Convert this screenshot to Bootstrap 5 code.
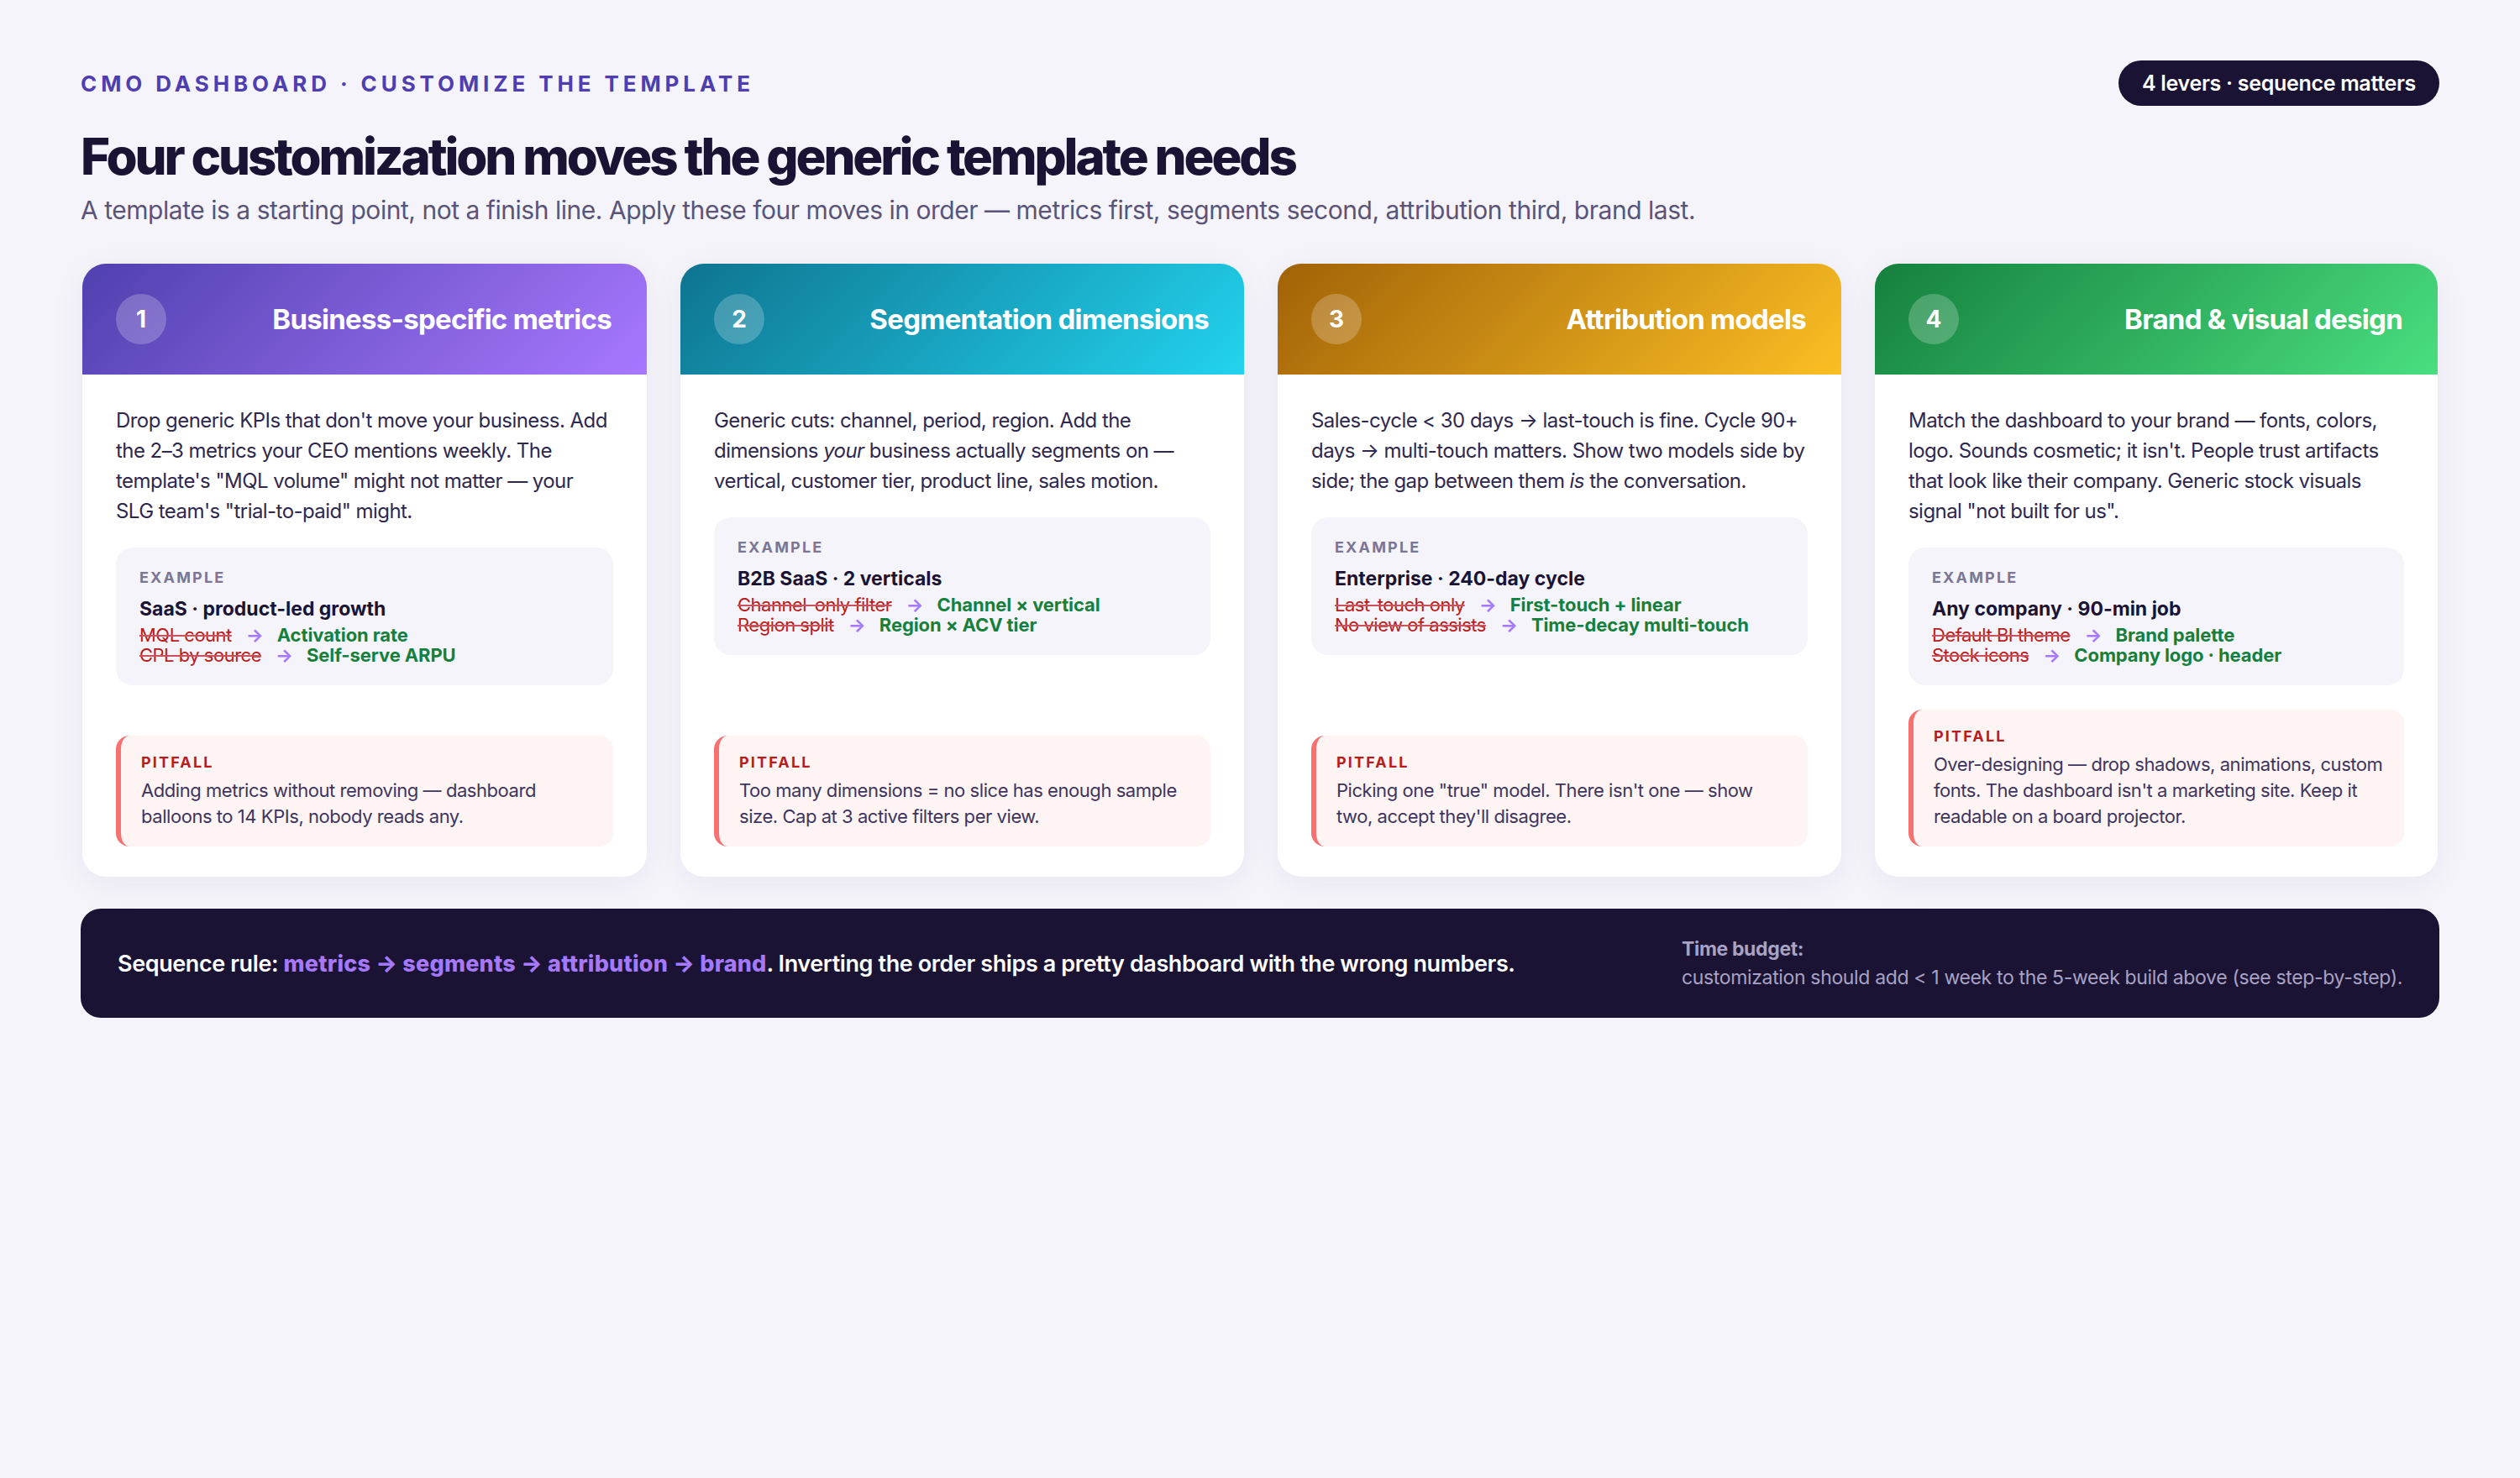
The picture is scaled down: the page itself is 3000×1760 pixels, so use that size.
<!DOCTYPE html>
<html lang="en">
<head>
  <meta charset="UTF-8" />
  <meta name="viewport" content="width=device-width, initial-scale=1.0"/>
  <title>Customize the template</title>
  <link href="https://cdn.jsdelivr.net/npm/bootstrap@5.3.0/dist/css/bootstrap.min.css" rel="stylesheet">
  <style>
    body {
      background: #f5f4fb;
      font-family: Inter, "Liberation Sans", sans-serif;
      color: #1a1333;
      min-height: 100vh;
    }

    .page { padding: 72px 96px; }

    .eyebrow {
      color: #4f3eb0;
      font-size: 26px;
      font-weight: 700;
      letter-spacing: 4.9px;
    }

    .pill {
      background: #1a1333;
      color: #fff;
      font-size: 25px;
      font-weight: 600;
      letter-spacing: -.3px;
      line-height: 30px;
      padding: 12px 28px;
    }

    .page-title {
      font-size: 60px;
      font-weight: 800;
      letter-spacing: -3.15px;
      line-height: 1.2;
      margin: 24px 0 6px;
    }

    .sub { color: #5a5478; font-size: 30px; letter-spacing: -.47px; line-height: 44px; margin-bottom: 42px; }

    .cards { grid-template-columns: 672fr 671fr 671fr 670fr; gap: 40px; margin: 0 2px; }

    .move {
      border-radius: 28px;
      box-shadow: 0 8px 40px rgba(26, 19, 51, .06);
      height: 730px;
    }

    .move-head {
      border: 0;
      border-radius: 28px 28px 0 0 !important;
      color: #fff;
      height: 132px;
      padding: 0 42px 0 40px;
    }

    .grad-1 { background: linear-gradient(135deg, #5040ae, #a878ff); }
    .grad-2 { background: linear-gradient(135deg, #0e7490, #22d3ee); }
    .grad-3 { background: linear-gradient(135deg, #a16207, #fbbf24); }
    .grad-4 { background: linear-gradient(135deg, #15803d, #4ade80); }

    .num {
      background: rgba(255, 255, 255, .22);
      font-size: 28px;
      font-weight: 700;
      height: 60px;
      width: 60px;
    }

    .move-title { font-size: 33px; font-weight: 700; letter-spacing: -.72px; padding-top: 2px; }

    .move-body { padding: 37px 40px 36px; }

    .move-text { color: #2e2850; font-size: 24px; letter-spacing: -.55px; line-height: 36px; margin-bottom: 25px; }

    .example { background: #f5f4fb; border-radius: 20px; padding: 24px 28px; height: 164px; }
    .example + .pitfall { margin-top: auto; }

    .tag { font-size: 18px; font-weight: 700; letter-spacing: .12em; line-height: 24px; }
    .tag-example { color: #7a7694; }
    .tag-pitfall { color: #b91c1c; margin-bottom: 6px; }

    .ex-title { font-size: 23px; font-weight: 700; line-height: 30px; margin-top: 10px; margin-bottom: 4px; }
    .ex-line { font-size: 22px; line-height: 24px; }
    .ex-line del { color: #b91c1c; letter-spacing: -.5px; text-decoration-color: #c9525c; }
    .ex-line b { color: #15803d; font-weight: 700; letter-spacing: -.1px; }
    .ex-line i { color: #a678fa; font-style: normal; font-weight: 700; margin: 0 16px 0 17px; }

    .pitfall {
      background: #fef4f3;
      border-left: 6px solid #f87171;
      border-radius: 16px;
      color: #3d3560;
      font-size: 22px;
      letter-spacing: -.45px;
      line-height: 31px;
      padding: 20px 24px;
    }

    .rule {
      background: #1a1333;
      border-radius: 24px;
      color: #fff;
      height: 130px;
      margin-top: 38px;
      padding: 0 44px;
    }

    .rule-main { font-size: 27px; font-weight: 600; letter-spacing: -.4px; padding-top: 3px; }
    .rule-main strong { color: #a678fa; font-weight: 800; letter-spacing: .2px; }
    .rule-side { color: #a8a2c4; font-size: 23px; letter-spacing: -.35px; line-height: 34px; }
    .rule-side strong { font-weight: 700; }
  </style>
</head>
<body>
  <div class="page">
    <div class="d-flex justify-content-between align-items-center">
      <div class="eyebrow text-uppercase">CMO dashboard · Customize the template</div>
      <div class="pill rounded-pill">4 levers · sequence matters</div>
    </div>
    <h1 class="page-title">Four customization moves the generic template needs</h1>
    <p class="sub">A template is a starting point, not a finish line. Apply these four moves in order — metrics first, segments second, attribution third, brand last.</p>

    <div class="d-grid cards">
      <div class="card move border-0">
        <div class="card-header move-head grad-1 d-flex justify-content-between align-items-center">
          <span class="num rounded-circle d-flex align-items-center justify-content-center">1</span>
          <span class="move-title">Business-specific metrics</span>
        </div>
        <div class="card-body move-body d-flex flex-column">
          <p class="move-text">Drop generic KPIs that don't move your business. Add the 2–3 metrics your CEO mentions weekly. The template's "MQL volume" might not matter — your SLG team's "trial-to-paid" might.</p>
          <div class="example">
            <div class="tag tag-example">EXAMPLE</div>
            <div class="ex-title">SaaS · product-led growth</div>
            <div class="ex-line"><del>MQL count</del><i>→</i><b>Activation rate</b></div>
            <div class="ex-line"><del>CPL by source</del><i>→</i><b>Self-serve ARPU</b></div>
          </div>
          <div class="pitfall">
            <div class="tag tag-pitfall">PITFALL</div>
            Adding metrics without removing — dashboard balloons to 14 KPIs, nobody reads any.
          </div>
        </div>
      </div>

      <div class="card move border-0">
        <div class="card-header move-head grad-2 d-flex justify-content-between align-items-center">
          <span class="num rounded-circle d-flex align-items-center justify-content-center">2</span>
          <span class="move-title">Segmentation dimensions</span>
        </div>
        <div class="card-body move-body d-flex flex-column">
          <p class="move-text">Generic cuts: channel, period, region. Add the dimensions <em>your</em> business actually segments on — vertical, customer tier, product line, sales motion.</p>
          <div class="example">
            <div class="tag tag-example">EXAMPLE</div>
            <div class="ex-title">B2B SaaS · 2 verticals</div>
            <div class="ex-line"><del>Channel-only filter</del><i>→</i><b>Channel × vertical</b></div>
            <div class="ex-line"><del>Region split</del><i>→</i><b>Region × ACV tier</b></div>
          </div>
          <div class="pitfall">
            <div class="tag tag-pitfall">PITFALL</div>
            Too many dimensions = no slice has enough sample size. Cap at 3 active filters per view.
          </div>
        </div>
      </div>

      <div class="card move border-0">
        <div class="card-header move-head grad-3 d-flex justify-content-between align-items-center">
          <span class="num rounded-circle d-flex align-items-center justify-content-center">3</span>
          <span class="move-title">Attribution models</span>
        </div>
        <div class="card-body move-body d-flex flex-column">
          <p class="move-text">Sales-cycle &lt; 30 days → last-touch is fine. Cycle 90+ days → multi-touch matters. Show two models side by side; the gap between them <em>is</em> the conversation.</p>
          <div class="example">
            <div class="tag tag-example">EXAMPLE</div>
            <div class="ex-title">Enterprise · 240-day cycle</div>
            <div class="ex-line"><del>Last-touch only</del><i>→</i><b>First-touch + linear</b></div>
            <div class="ex-line"><del>No view of assists</del><i>→</i><b>Time-decay multi-touch</b></div>
          </div>
          <div class="pitfall">
            <div class="tag tag-pitfall">PITFALL</div>
            Picking one "true" model. There isn't one — show two, accept they'll disagree.
          </div>
        </div>
      </div>

      <div class="card move border-0">
        <div class="card-header move-head grad-4 d-flex justify-content-between align-items-center">
          <span class="num rounded-circle d-flex align-items-center justify-content-center">4</span>
          <span class="move-title">Brand &amp; visual design</span>
        </div>
        <div class="card-body move-body d-flex flex-column">
          <p class="move-text">Match the dashboard to your brand — fonts, colors, logo. Sounds cosmetic; it isn't. People trust artifacts that look like their company. Generic stock visuals signal "not built for us".</p>
          <div class="example">
            <div class="tag tag-example">EXAMPLE</div>
            <div class="ex-title">Any company · 90-min job</div>
            <div class="ex-line"><del>Default BI theme</del><i>→</i><b>Brand palette</b></div>
            <div class="ex-line"><del>Stock icons</del><i>→</i><b>Company logo · header</b></div>
          </div>
          <div class="pitfall">
            <div class="tag tag-pitfall">PITFALL</div>
            Over-designing — drop shadows, animations, custom fonts. The dashboard isn't a marketing site. Keep it readable on a board projector.
          </div>
        </div>
      </div>
    </div>

    <div class="rule d-flex justify-content-between align-items-center">
      <div class="rule-main">Sequence rule: <strong>metrics → segments → attribution → brand</strong>. Inverting the order ships a pretty dashboard with the wrong numbers.</div>
      <div class="rule-side"><strong>Time budget:</strong><br>customization should add &lt; 1 week to the 5-week build above (see step-by-step).</div>
    </div>
  </div>
  <script src="https://cdn.jsdelivr.net/npm/bootstrap@5.3.0/dist/js/bootstrap.bundle.min.js"></script>
</body>
</html>
